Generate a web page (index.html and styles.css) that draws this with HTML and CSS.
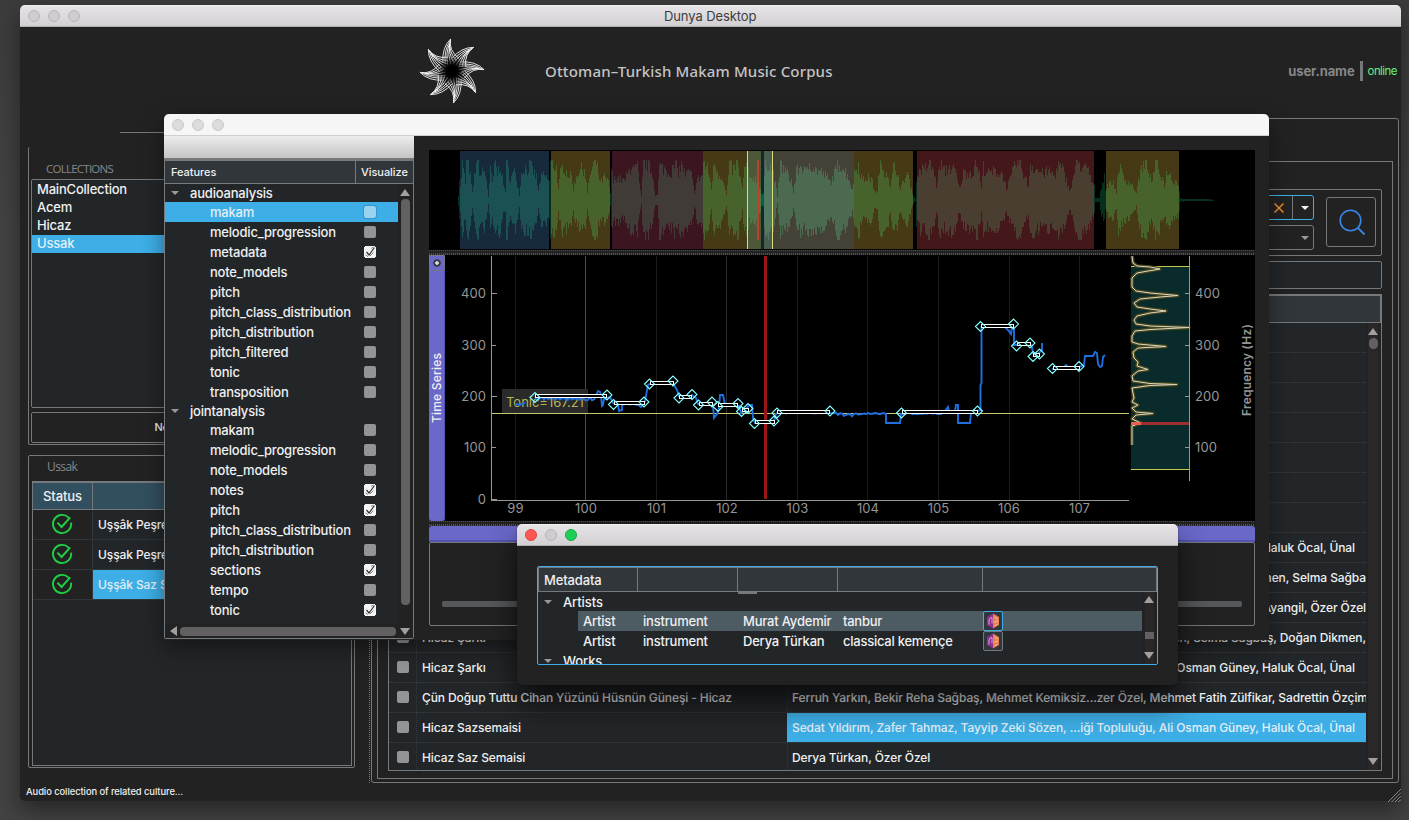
FILE: index.html
```html
<!DOCTYPE html>
<html lang="en">
<head>
<meta charset="utf-8">
<title>Dunya Desktop</title>
<link rel="stylesheet" href="styles.css">
</head>
<body>
<svg class="defs" width="0" height="0">
  <symbol id="ok" viewBox="0 0 22 22"><path d="M17.6 4.6A9.1 9.1 0 1 0 20.1 9.6M6.4 9.6l4.2 4.4 8.6-9.6" fill="none" stroke="#1fd044" stroke-width="1.9"/></symbol>
  <symbol id="cube" viewBox="0 0 14 16"><path d="M7 .5L1 4v8l6 3.5z" fill="#8a2f8c"/><path d="M7 .5L13 4v8l-6 3.5z" fill="#e8814f"/><path d="M3 11.500V7q1-3 3-2.500v6" fill="none" stroke="#d8a0dc" stroke-width="1"/><path d="M8.500 4l3 2M8.500 9l3.500-1M9 13l2-2" stroke="#f8c9a0" stroke-width=".9"/></symbol>
  <symbol id="petal" viewBox="-34 -34 68 68" overflow="visible"><path d="M-2-33Q-11-24-9.500-8M-2.500-31Q-9-21-7-7M-3-28Q-7-19-4.500-6M-3-27Q-5-17-1.500-7M-3-28Q-4-18 1.500-9M-2.500-31Q-4-20 4-11M-2-33Q-4-21 7-13" fill="none" stroke="#fff" stroke-width=".85"/></symbol>
  <symbol id="chk" viewBox="0 0 12 12"><path d="M0 0h12v12H0z" fill="#f4f4f4"/><path d="M0 1V0h1M11 0h1v1M12 11v1h-1M1 12H0v-1" fill="none" stroke="#111" stroke-width="1.400"/><path d="M2.500 6l2.500 3L10.500 1.500" fill="none" stroke="#333" stroke-width="1.200"/><path d="M1.500 9l2.500 1.500M6 10l3.500-3.500M7 2.500L9.500 1" stroke="#777" stroke-width=".9"/></symbol>
</svg>

<div class="window main">
  <div class="titlebar"><i></i><i></i><i></i><span>Dunya Desktop</span></div>
  <header class="banner">
    <svg class="logo" viewBox="-34 -34 68 68">
      <g id="petals"></g>
      <circle r="16" fill="url(#core)"/>
      <radialGradient id="core"><stop offset=".3" stop-color="#000"/><stop offset="1" stop-color="#000" stop-opacity="0"/></radialGradient>
    </svg>
    <h1>Ottoman–Turkish Makam Music Corpus</h1>
    <div class="user"><b>user.name</b><i></i><span>online</span></div>
  </header>
  <div class="body">
    <aside class="left">
      <div class="tabline"></div>
      <section class="box collections">
        <h2>COLLECTIONS</h2>
        <ul class="list"><li>MainCollection</li><li>Acem</li><li>Hicaz</li><li class="sel">Ussak</li></ul>
        <div class="newbtn">New Collection</div>
      </section>
      <section class="box ussak">
        <h2>Ussak</h2>
        <div class="status">
          <div class="sr head"><span>Status</span><span></span></div>
          <div class="sr"><span><svg><use href="#ok"/></svg></span><span>Uşşâk Peşrevi</span></div>
          <div class="sr"><span><svg><use href="#ok"/></svg></span><span>Uşşak Peşrevi</span></div>
          <div class="sr"><span><svg><use href="#ok"/></svg></span><span class="sel">Uşşâk Saz Semaisi</span></div>
        </div>
      </section>
    </aside>
    <div class="vsplit"></div>
    <main class="right">
      <div class="inner">
        <div class="filters">
          <div class="combos">
            <div class="combo on"><svg class="x" viewBox="0 0 10 10"><path d="M.5.500l9 9M9.500.500l-9 9" stroke="#f08a24" stroke-width="1.500"/></svg><span><b class="down"></b></span></div>
            <div class="combo"><span><b class="down dim"></b></span></div>
          </div>
          <div class="search"><svg viewBox="0 0 28 28"><circle cx="11.500" cy="11.500" r="10.300" fill="none" stroke="#3d84e6" stroke-width="1.600"/><path d="M18.500 18.500l7 7" stroke="#3d84e6" stroke-width="1.800"/></svg></div>
        </div>
        <div class="searchline"></div>
        <div class="table">
          <div class="thead"></div>
          <div class="tbody">
            <div class="rows">
              <div class="row"></div><div class="row"></div><div class="row"></div><div class="row"></div><div class="row"></div><div class="row"></div><div class="row"></div>
              <div class="row"><i></i><span></span><p class="end w11">Osman Güney, Haluk Öcal, Ünal</p></div>
              <div class="row"><i></i><span></span><p class="end">Doğan Dikmen, Selma Sağba</p></div>
              <div class="row"><i></i><span></span><p class="end">Ruhi Ayangil, Özer Özel</p></div>
              <div class="row"><i></i><span>Hicaz Şarkı</span><p class="end">Doğan Dikmen, Selma Sağbaş, Doğan Dikmen,</p></div>
              <div class="row"><i></i><span>Hicaz Şarkı</span><p class="end w11">Ali Osman Güney, Haluk Öcal, Ünal</p></div>
              <div class="row"><i></i><span>Çün Doğup Tuttu Cihan Yüzünü Hüsnün Güneşi - Hicaz</span><p>Ferruh Yarkın, Bekir Reha Sağbaş, Mehmet Kemiksiz...zer Özel, Mehmet Fatih Zülfikar, Sadrettin Özçim</p></div>
              <div class="row"><i></i><span>Hicaz Sazsemaisi</span><p class="sel">Sedat Yıldırım, Zafer Tahmaz, Tayyip Zeki Sözen, ...iği Topluluğu, Ali Osman Güney, Haluk Öcal, Ünal</p></div>
              <div class="row"><i></i><span>Hicaz Saz Semaisi</span><p>Derya Türkan, Özer Özel</p></div>
            </div>
            <div class="vbar"><b class="up"></b><u></u><b class="dn"></b></div>
          </div>
        </div>
      </div>
    </main>
  </div>
  <footer>Audio collection of related culture...<svg viewBox="0 0 13 13"><path d="M0 13L13 0M3.500 13L13 3.500M7 13l6-6M10.500 13l2.500-2.500" stroke="#999" stroke-width=".9"/></svg></footer>
</div>

<div class="window player">
  <div class="titlebar light"><i></i><i></i><i></i></div>
  <div class="pbody">
    <div class="dock">
      <div class="toolbar"></div>
      <div class="tree">
        <div class="trhead"><span>Features</span><span>Visualize</span></div>
        <div class="trmid">
          <div class="items">
            <div class="grp"><b class="down dim"></b>audioanalysis</div>
            <div class="it sel">makam<i class="ck"></i></div>
            <div class="it">melodic_progression<i class="ck"></i></div>
            <div class="it">metadata<svg class="chk"><use href="#chk"/></svg></div>
            <div class="it">note_models<i class="ck"></i></div>
            <div class="it">pitch<i class="ck"></i></div>
            <div class="it">pitch_class_distribution<i class="ck"></i></div>
            <div class="it">pitch_distribution<i class="ck"></i></div>
            <div class="it">pitch_filtered<i class="ck"></i></div>
            <div class="it">tonic<i class="ck"></i></div>
            <div class="it">transposition<i class="ck"></i></div>
            <div class="grp"><b class="down dim"></b>jointanalysis</div>
            <div class="it">makam<i class="ck"></i></div>
            <div class="it">melodic_progression<i class="ck"></i></div>
            <div class="it">note_models<i class="ck"></i></div>
            <div class="it">notes<svg class="chk"><use href="#chk"/></svg></div>
            <div class="it">pitch<svg class="chk"><use href="#chk"/></svg></div>
            <div class="it">pitch_class_distribution<i class="ck"></i></div>
            <div class="it">pitch_distribution<i class="ck"></i></div>
            <div class="it">sections<svg class="chk"><use href="#chk"/></svg></div>
            <div class="it">tempo<i class="ck"></i></div>
            <div class="it">tonic<svg class="chk"><use href="#chk"/></svg></div>
          </div>
          <div class="vbar"><b class="up"></b><u></u></div>
        </div>
        <div class="hbar"><b class="lt"></b><u></u><b class="dn"></b></div>
      </div>
    </div>
    <div class="plots">
      <svg class="wave" width="826" height="100" viewBox="429 150 826 100" shape-rendering="crispEdges"><g id="segs"></g><g id="waves"></g>
        <rect x="747" y="151" width="25" height="98" fill="#5fa08c" fill-opacity=".3"/>
        <rect x="761" y="151" width="3" height="98" fill="#0b2c2a"/><rect x="761" y="194" width="3" height="12" fill="#0d5c48"/>
        <path d="M747.500 151v98M772.500 151v98" stroke="#dcdc78"/><rect x="757" y="160" width="2" height="80" fill="#c0402c"/>
      </svg>
      <div class="hsplit"></div>
      <div class="series">
        <div class="vtab"><i></i><span>Time Series</span></div>
        <svg class="chart" width="810" height="266" viewBox="445 255 810 266">
          <g shape-rendering="crispEdges">
            <path d="M515.500 256v244M656.500 256v244M797.500 256v244M867.500 256v244M938.500 256v244M1009.500 256v244M1079.500 256v244" stroke="#1c1c1c"/>
            <path d="M585.500 256v244" stroke="#4b4b4b"/><path d="M726.500 256v244" stroke="#2c2c2c"/>
            <rect x="502" y="389" width="86" height="24" fill="#2a2a2a"/>
          </g>
          <text x="506" y="406.500" fill="#b4b45a" class="t" textLength="78">Tonic=167.21</text>
          <g shape-rendering="crispEdges">
            <path d="M491 413.500h638" stroke="#c8c86e"/>
            <path d="M491.500 256v244.500H1129M492 293.500h5M492 345.500h4M492 396.500h5M492 447.500h4M492 499.500h5" fill="none" stroke="#969696"/>
          </g>
          <path id="pitch" fill="none" stroke="#1e6fe0" stroke-width="1.900"/>
          <rect x="764" y="256" width="3" height="243" fill="#981616"/>
          <g id="notes"></g>
          <g class="t" text-anchor="end"><text x="486" y="298">400</text><text x="486" y="350">300</text><text x="486" y="401">200</text><text x="486" y="452">100</text><text x="486" y="504">0</text></g>
          <g class="t" text-anchor="middle" id="ticks"></g>
          <g shape-rendering="crispEdges"><rect x="1131" y="266" width="58" height="203" fill="#092b2b"/>
            <path d="M1131 266.500h58M1131 469.500h58" stroke="#c8c850"/></g>
          <g id="hist" fill="none" stroke-linejoin="round"></g>
          <g shape-rendering="crispEdges"><rect x="1131" y="422" width="58" height="3" fill="#b03030" fill-opacity=".9"/><rect x="1131" y="422" width="10" height="3" fill="#e86050"/>
            <path d="M1189.500 256v225M1185 293.500h4M1185 345.500h4M1185 396.500h4M1185 447.500h4" stroke="#969696"/></g>
          <g class="t"><text x="1195" y="298">400</text><text x="1195" y="350">300</text><text x="1195" y="401">200</text><text x="1195" y="452">100</text></g>
          <text class="t bold" transform="translate(1251 370) rotate(-90)" text-anchor="middle" textLength="92">Frequency (Hz)</text>
        </svg>
      </div>
      <div class="hsplit"></div>
      <div class="htab"></div>
      <div class="sliderbox"><div></div></div>
    </div>
  </div>
</div>

<div class="window meta">
  <div class="titlebar active"><i></i><i></i><i></i></div>
  <div class="mtable">
    <div class="mhead"><span>Metadata</span><span></span><span></span><span></span><span></span></div>
    <div class="mbody">
      <div class="mrows">
        <div class="mgrp"><b class="down dim"></b>Artists<s></s></div>
        <div class="mrow sel"><span>Artist</span><span>instrument</span><span>Murat Aydemir</span><span>tanbur</span><em class="on"><svg><use href="#cube"/></svg></em></div>
        <div class="mrow"><span>Artist</span><span>instrument</span><span>Derya Türkan</span><span>classical kemençe</span><em><svg><use href="#cube"/></svg></em></div>
        <div class="mgrp"><b class="down dim"></b>Works</div>
      </div>
      <div class="vbar"><b class="up"></b><u></u><b class="dn"></b></div>
    </div>
  </div>
</div>
<script src="plots.js"></script>
</body>
</html>
```
FILE: styles.css
```css
* { box-sizing: border-box; margin: 0; padding: 0; }
body { width: 1409px; height: 820px; overflow: hidden; position: relative; background: linear-gradient(#3c3c3c, #444 30%, #434343); font: 450 13px/18px Inter, "Liberation Sans", sans-serif; color: #eff0f1; letter-spacing: -.2px; }
i, em { font-style: normal; }
ul { list-style: none; }
.defs { position: absolute; }
.sel { background: #3daee6; color: #e2eef6; }

.window { position: absolute; display: flex; flex-direction: column; background: #222; border-radius: 5px; }
.main { left: 20px; top: 5px; width: 1381px; height: 796px; box-shadow: 0 10px 24px rgba(0,0,0,.45); }
.player { left: 164px; top: 114px; width: 1105px; height: 526px; border-radius: 5px 5px 0 0; box-shadow: 0 8px 22px rgba(0,0,0,.42); }
.meta { left: 517px; top: 524px; width: 661px; height: 161px; box-shadow: 0 18px 30px rgba(0,0,0,.65), 0 0 2px rgba(0,0,0,.4); }

.titlebar { flex: none; height: 22px; display: flex; align-items: center; gap: 8px; padding-left: 8px; border-radius: 5px 5px 0 0; background: linear-gradient(#f3f1f3 0, #e5e3e5 8%, #d2d0d2); border-bottom: 1px solid #b0aeb0; }
.titlebar i { width: 12px; height: 12px; border-radius: 50%; background: #cfcdcf; border: 1px solid #b6b4b6; }
.titlebar span { color: #3c3c3e; margin-left: 576px; letter-spacing: -.1px; font-weight: 400; }
.light { background: #f6f6f6; border-color: #cfcfcf; }
.light i { background: #dcdcdc; border-color: #c8c8c8; }
.active i:nth-child(1) { background: #fc5753; border-color: #e1443f; }
.active i:nth-child(3) { background: #1fce58; border-color: #12ac3f; }

.banner { height: 91px; flex: none; display: flex; align-items: center; padding: 0 4px 3px 399px; }
.logo { width: 66px; height: 66px; }
h1 { font: 500 15px/20px "Noto Sans", sans-serif; color: #c4c4c4; margin-left: 60px; letter-spacing: .16px; }
.user { margin-left: auto; display: flex; align-items: center; color: #85878a; }
.user b { font-weight: 700; letter-spacing: -.1px; }
.user i { width: 3px; height: 20px; background: #76797c; margin: 0 5px; }
.user span { font-size: 11.500px; font-weight: 400; color: #63f07f; letter-spacing: -.55px; }

.body { height: 665px; display: flex; padding-left: 8px; }
.left { width: 327px; padding-top: 14px; }
.tabline { height: 1px; margin-left: 92px; background: #76797c; }
.box { border: 1px solid #76797c; border-radius: 2px; padding: 0 2px; }
.box h2 { font: 12px/16px "Open Sans", sans-serif; letter-spacing: -.6px; color: #85888b; }
.collections { margin-top: 14px; height: 298px; border-top: 0; }
.collections h2 { font-size: 11.500px; padding: 14px 0 2px 15px; letter-spacing: -.75px; }
.list { height: 229px; border: 1px solid #76797c; border-radius: 2px; background: #232629; padding-top: 1px; }
.list li { height: 18px; line-height: 17px; padding-left: 5px; }
.newbtn { margin-top: 4px; height: 31px; border: 1px solid #76797c; border-radius: 2px; font: 500 11px/29px Inter, sans-serif; text-align: center; letter-spacing: -.4px; }
.ussak { margin-top: 10px; height: 313px; padding: 3px 2px 1px 3px; }
.ussak h2 { padding-left: 15px; font-size: 12px; }
.status { margin-top: 6px; height: 285px; border: 1px solid #76797c; background: #232629; }
.sr { display: flex; height: 30px; }
.sr span { border-bottom: 1px solid #31363b; line-height: 29px; flex: 1; padding-left: 5px; white-space: nowrap; overflow: hidden; font-size: 12px; letter-spacing: -.1px; }
.sr span:first-child { flex: none; width: 60px; border-right: 1px solid #31363b; background: #222; padding: 3px 0 0 18px; }
.sr svg { width: 22px; height: 22px; display: block; }
.sr.head { height: 28px; border-top: 1px solid #76797c; }
.sr.head span, .sr.head span:first-child { background: #314f5e; border-color: #76797c; font: 500 13px/26px Inter, sans-serif; padding: 0 0 0 10px; }

.vsplit { width: 1px; margin: 0 0 0 14px; background: repeating-linear-gradient(#777 0 1px, transparent 1px 2px); }
.right { margin-left: 1px; width: 1028px; height: 665px; border: 1px solid #76797c; border-radius: 3px; padding: 42px 5px 3px; }
.inner { height: 618px; border: 1px solid #76797c; padding: 27px 10px 7px 10px; }
.filters { height: 67px; border: 1px solid #76797c; border-radius: 2px; display: flex; justify-content: flex-end; align-items: flex-start; padding: 5px 5px 0 0; gap: 12px; }
.combos { display: flex; flex-direction: column; gap: 5px; }
.combo { width: 300px; height: 25px; border: 1px solid #76797c; border-radius: 3px; display: flex; justify-content: flex-end; align-items: center; }
.combo.on { border-color: #3daee9; }
.combo .x { width: 10px; height: 10px; }
.combo span { width: 21px; height: 23px; display: flex; align-items: center; justify-content: center; margin-left: 8px; padding-left: 4px; }
.combo.on span { border-left: 1px solid #76797c; }
.down { border: 4px solid transparent; border-top: 4px solid #eff0f1; border-bottom: 0; width: 0; height: 0; }
.down.dim { border-top-color: #999; }
.search { width: 50px; height: 50px; margin-top: 2px; border: 1px solid #76797c; border-radius: 3px; padding: 11px 0 0 12px; }
.search svg { width: 28px; height: 28px; display: block; }
.searchline { height: 28px; margin-top: 5px; border: 1px solid #76797c; border-radius: 2px; background: #232629; }
.table { margin-top: 5px; height: 477px; border: 1px solid #76797c; background: #232629; }
.thead { height: 28px; background: #31363b; border: 1px solid #76797c; border-left: 0; }
.tbody { height: 447px; display: flex; overflow: hidden; }
.rows { flex: 1; min-width: 0; }
.row { height: 30px; display: flex; align-items: center; border-bottom: 1px dotted #3b4045; font-size: 12px; letter-spacing: -.1px; }
.row i { width: 12px; height: 12px; margin: 0 7px 1px 8px; border-radius: 2px; background: #939496; flex: none; }
.row span { width: 371px; border-left: 1px dotted #33383d; height: 30px; line-height: 29px; padding-left: 5px; flex: none; white-space: nowrap; }
.row p { flex: 1; min-width: 0; height: 29px; line-height: 29px; padding-left: 4px; border-left: 1px dotted #33383d; white-space: nowrap; overflow: hidden; }
.row p.sel { border-left-color: #3daee6; }
.row p.end { display: flex; justify-content: flex-end; }
.row p.w11 { padding-right: 11px; }
.vbar { display: flex; flex-direction: column; align-items: center; flex: none; background: #222; }
.vbar u { background: #626062; border-radius: 4px; display: block; }
.up, .dn { width: 0; height: 0; border: 5px solid transparent; }
.up { border-bottom: 7px solid #a0a0a0; border-top: 0; }
.dn { border-top: 7px solid #a0a0a0; border-bottom: 0; }
.table .vbar { width: 15px; padding: 5px 1px 5px 0; background: linear-gradient(90deg, #222 2px, #2a2728 2px 12px, #222 12px); }
.table .vbar u { width: 9px; height: 11px; margin-top: 3px; border-radius: 5px; }
.table .vbar .dn { margin-top: auto; }
footer { font: 500 9.400px/14px Inter, sans-serif; padding: 2px 0 0 6px; display: flex; justify-content: space-between; letter-spacing: -.07px; }
footer svg { width: 13px; height: 13px; margin-top: 4px; }

.pbody { display: flex; height: 504px; }
.dock { width: 250px; }
.toolbar { height: 22px; background: linear-gradient(#ededed, #c4c4c4); }
.tree { height: 481px; border: 1px solid #76797c; border-top-width: 2px; background: #232629; border-radius: 0 0 2px 2px; }
.trhead { height: 24px; display: flex; background: #31363b; border: solid #76797c; border-width: 1px 0; font: 500 11px/23px Inter, sans-serif; letter-spacing: -.05px; }
.trhead span:first-child { width: 191px; padding-left: 6px; border-right: 1px solid #76797c; }
.trhead span + span { padding-left: 5px; }
.trmid { display: flex; height: 440px; }
.items { flex: 1; }
.grp { height: 18px; padding-left: 6px; display: flex; align-items: center; gap: 11px; }
.it { height: 20px; padding: 0 22px 0 45px; display: flex; justify-content: space-between; align-items: center; }
.ck { width: 12px; height: 12px; border-radius: 2px; background: #939496; }
.it.sel .ck { background: #9ad3f2; outline: 1px solid #3596cb; }
.chk { width: 12px; height: 12px; }
.tree .vbar { width: 15px; padding: 5px 1px 5px 0; }
.tree .vbar u { width: 9px; height: 406px; margin-top: 3px; }
.hbar { display: flex; align-items: center; height: 14px; background: #222; padding: 0 3px 0 5px; }
.hbar .lt { width: 0; height: 0; border: 5px solid transparent; border-right: 7px solid #a0a0a0; border-left: 0; }
.hbar u { width: 216px; height: 9px; background: #626062; border-radius: 4px; margin: 0 4px 0 3px; }
.plots { padding: 14px 0 0 15px; width: 841px; }
.plots svg { display: block; background: #000; }
.hsplit { height: 5px; background: repeating-linear-gradient(90deg, #505050 0 1px, transparent 1px 2px) 0 0 / 100% 1px no-repeat, repeating-linear-gradient(90deg, #505050 0 1px, transparent 1px 2px) 0 3px / 100% 2px no-repeat; }
.series { display: flex; height: 266px; }
.vtab { width: 16px; background: #6a68c8; border-right: 1px solid #5553b4; border-radius: 0 0 3px 3px; }
.vtab i { display: block; width: 16px; height: 16px; border: 1px solid #77778a; border-radius: 2px; background: radial-gradient(circle, #ddd 0 1.500px, #3c3c44 2px 3.500px, transparent 4px); }
.vtab span { display: block; writing-mode: vertical-rl; transform: rotate(180deg); height: 152px; line-height: 16px; font-size: 12px; letter-spacing: .2px; width: 16px; }
.htab { height: 16px; background: #6a68c8; border-bottom: 2px solid #5553b4; border-radius: 3px 3px 0 0; }
.sliderbox { height: 84px; border: 1px solid #76797c; border-radius: 2px; padding: 58px 12px 0; }
.sliderbox div { height: 6px; border-radius: 2px; background: #55595c; }
.t { font: 13px Inter, sans-serif; fill: #969696; letter-spacing: .1px; }
text.t[fill] { fill: #b4b45a; }
text.bold { font-weight: 600; font-size: 12px; }

.mtable { margin: 20px 20px 0; height: 99px; border: 1px solid #3daee9; border-radius: 2px; background: #232629; overflow: hidden; }
.mhead { height: 25px; display: flex; background: #31363b; border: 1px solid #76797c; line-height: 24px; letter-spacing: -.15px; }
.mhead span { width: 100px; padding-left: 5px; border-right: 1px solid #76797c; }
.mhead span:first-child { width: 99px; }
.mhead span:nth-child(4) { width: 145px; }
.mhead span:last-child { flex: 1; border: 0; }
.mbody { display: flex; height: 72px; }
.mrows { flex: 1; height: 72px; overflow: hidden; }
.mgrp { height: 19px; padding: 1px 0 0 6px; display: flex; align-items: center; gap: 11px; letter-spacing: -.1px; }
.mgrp s { width: 19px; height: 2px; margin: -18px 0 0 124px; background: #76797c; }
.mrow { height: 20px; margin-left: 40px; display: flex; line-height: 20px; letter-spacing: -.2px; white-space: nowrap; }
.mrow.sel { background: #4d5b63; color: #eff0f1; }
.mrow span { width: 100px; padding-left: 5px; }
.mrow span:first-child { width: 60px; }
.mrow span:nth-child(4) { width: 145px; letter-spacing: -.25px; }
.mrow em { width: 20px; height: 20px; border: 1px solid #76797c; border-radius: 2px; background: #31363b; display: flex; align-items: center; justify-content: center; }
.mrow em.on { border-color: #3daee9; }
.mrow svg { width: 14px; height: 16px; }
.mtable .vbar { width: 15px; padding: 4px 1px 4px 0; background: linear-gradient(90deg, #222 3px, #2a2728 3px 12px, #222 12px); }
.mtable .vbar u { width: 9px; height: 7px; margin-top: 29px; border-radius: 0; }
.mtable .vbar .dn { margin-top: 13px; }
```
FILE: plots.js
```js
const byId = id => document.getElementById(id);

byId('petals').innerHTML = Array.from({ length: 8 }, (_, k) =>
  `<use href="#petal" x="-34" y="-34" width="68" height="68" transform="rotate(${k * 45 + 1})"/>`).join('');

// section: start, end, background, waveform colour
const sections = [
  [429, 460, '#000', '#05301f'], [460, 549, '#16293d', '#1b5152'], [549, 551, '#000', '#05301f'],
  [551, 610, '#463a16', '#48622c'], [610, 612, '#000', '#05301f'], [612, 703, '#3b151f', '#403b36'],
  [703, 761, '#463a16', '#48622c'], [761, 764, '#000', '#05301f'], [764, 854, '#444136', '#4b6a50'],
  [854, 913, '#463a16', '#48622c'], [913, 917, '#000', '#05301f'], [917, 1094, '#44181b', '#4a3e31'],
  [1094, 1106, '#000', '#05301f'], [1106, 1179, '#463a16', '#48622c'], [1179, 1255, '#000', '#05301f']
];
// envelope: x, half height
const env = [457,0,458,5,459,23,460,12,462,38,465,18,466,40,468,40,470,25,472,7,474,25,476,40,478,40,480,25,483,32,486,22,488,4,490,30,492,18,495,40,497,28,500,38,503,15,505,10,506,40,510,22,513,28,515,30,519,6,521,28,524,35,527,32,529,37,532,32,536,24,538,9,540,22,543,26,547,22,549,20,550,40,552,38,556,34,558,10,560,28,563,36,567,28,571,24,573,12,576,25,579,32,584,34,587,8,590,28,594,40,596,38,600,18,604,24,608,18,610,8,611,31,613,20,616,25,620,22,624,20,628,28,632,40,634,30,637,36,639,15,641,4,643,40,646,40,650,32,652,28,655,5,657,5,659,35,663,33,668,30,671,30,675,36,678,30,682,38,685,24,688,30,691,25,694,8,697,22,702,26,703,40,708,30,711,12,714,40,718,28,722,24,724,14,726,5,729,35,733,32,737,40,740,22,742,12,744,30,747,40,749,20,753,25,757,22,760,12,762,6,765,35,768,40,771,35,773,30,777,4,780,38,784,32,788,26,791,20,793,8,796,30,801,36,806,28,809,40,815,32,820,30,826,25,830,18,835,30,839,40,845,30,848,25,852,10,854,30,858,38,862,20,867,24,871,22,874,10,877,8,879,36,884,32,888,28,890,12,893,34,897,32,900,10,903,20,907,28,910,15,913,4,915,1,916,25,917,22,920,35,923,30,929,40,933,32,936,15,940,38,944,30,949,35,955,30,959,12,963,28,968,30,972,28,976,40,979,28,981,12,983,35,988,28,994,30,1002,28,1006,12,1010,22,1016,40,1020,38,1024,25,1028,15,1030,38,1036,32,1042,28,1049,30,1054,26,1058,36,1062,32,1070,10,1076,40,1082,36,1088,30,1092,18,1094,15,1095,2,1099,2,1101,15,1104,27,1105,10,1107,15,1112,20,1116,8,1118,36,1124,22,1130,18,1134,12,1136,6,1138,22,1142,36,1148,35,1151,16,1155,40,1160,28,1164,16,1167,32,1172,22,1178,18,1180,1.5,1200,1,1213,.5,1214,0];
let seed = 7;
const rnd = () => (seed = (seed * 16807) % 2147483647) / 2147483647;
function height(x) {
  for (let i = 0; i < env.length - 2; i += 2)
    if (x >= env[i] && x <= env[i + 2])
      return env[i + 1] + (env[i + 3] - env[i + 1]) * (x - env[i]) / (env[i + 2] - env[i]);
  return 0;
}
let backs = '', waves = '';
for (const [a, b, bg, fg] of sections) {
  backs += `<rect x="${a}" y="151" width="${b - a}" height="98" fill="${bg}"/>`;
  let d = '';
  for (let x = a; x < b; x++) {
    const h = height(x);
    if (h <= 0) continue;
    const up = Math.max(.5, Math.min(40, Math.round(h * (.72 + .45 * rnd()))));
    const down = Math.max(.5, Math.min(40, Math.round(h * (.72 + .45 * rnd()))));
    d += `M${x} ${200 - up}h1v${up + down}h-1z`;
  }
  waves += `<path d="${d}" fill="${fg}"/>`;
}
byId('segs').innerHTML = backs;
byId('waves').innerHTML = waves;

byId('ticks').innerHTML = [99,100,101,102,103,104,105,106,107]
  .map((n, i) => `<text x="${515.5 + i * 70.5}" y="513">${n}</text>`).join('');

// jittered stretches stand for the small wobble of a held pitch
function wobble(x0, x1, y, amp) {
  let d = '';
  for (let x = x0; x <= x1; x += 2) d += ` ${x},${(y + (rnd() - .5) * amp).toFixed(1)}`;
  return d;
}
byId('pitch').setAttribute('d',
  'M515,405 517,404 519,405 525,403M535,398' + wobble(538, 594, 398.5, 4) +
  ' 596,396 598,391 600,392 601,396 602,406 603,405 604,399 607,398 610,397 613,403 618,405 619,411 622,410 622,404' + wobble(624, 638, 404, 1.5) +
  ' 641,407 645,401 648,385 650,384 672,384 674,385 677,390 679,396 690,397 692,395 696,398 698,404 711,404 713,406 714,418 717,414 719,408 720,395 723,395 725,405 739,406 741,413 744,411 747,408 749,405 752,405 753,418 755,423 772,422 774,421 776,414 778,413' +
  wobble(780, 836, 413, 1) + wobble(838, 858, 414.5, 4) + wobble(860, 884, 413.5, 1.5) +
  ' 886,414 886,423 900,423 901,414' + wobble(903, 942, 413.5, 2) +
  ' 945,411 948,407 949,412 955,411 956,405 958,405 958,423 970,423 971,413 977,411 980.5,410 980.5,385 981.5,383 981.5,327 1005,327 1008,330 1011,334 1012,327 1014,329 1014,345 1030,344 1032,347 1033,353 1035,355 1038,354 1042,350 1042,343' +
  'M1052,369 1063,368 1066,365 1070,369 1078,368 1081,366 1084,365 1085,356 1093,356 1095,352 1097,353 1098,364 1100,367 1102,366 1103,357 1105,355');

// x start, x end, y, start marker y, end marker y
const notes = [[535,607,396,397.5,395],[613.5,644,403,404.5,402],[649.5,673,383,384,381],[679,692,396.5,398,394.5],[698.5,712,403.5,405,402],[718,738,405,406.5,403.5],[741.5,748,410,411.5,408.5],[754.5,774,422,423.5,421],[777,830,412,413,411],[901.5,977.5,412,413,411],[980.5,1013.5,325.5,326.5,324],[1016.5,1030,344,346,343],[1033,1039.5,355,356.5,354],[1052.5,1079,367.5,368.5,366.5]];
const diamond = (x, y) => `M${x - 5} ${y}l5-5 5 5-5 5z`;
byId('notes').innerHTML = notes.map(([a, b, y, y0, y1]) =>
  `<rect x="${Math.round(a) + .5}" y="${Math.round(y) - 1.5}" width="${Math.round(b - a) - 1}" height="3" fill="#000" stroke="#fff"/>` +
  `<path d="${diamond(a, y0)}${diamond(b, y1)}" fill="none" stroke="#8ff" stroke-width="1.1"/>`).join('');

const hist = 'M1132,256 1133,263 1137,266 1150,267 1160,269 1148,271 1137,273 1132,278 1132,287 1136,291 1150,293 1178,295.5 1160,297 1140,299 1134,303 1137,307 1150,309 1166,311 1150,313 1137,316 1134,320 1136,324 1150,326 1189,327.5 1150,329.5 1135,331 1132,336 1132,342 1138,344 1166,346.5 1138,348 1133,352 1134,358 1138,362 1137,366 1148,369.5 1138,371 1132,376 1133,381 1150,383.5 1177,384.5 1150,385.5 1132,388 1133,393 1134,398 1132,402 1138,405 1132,408 1136,412 1153,413.5 1136,415 1132,419 1141,423 1132,426 1132,445';
byId('hist').innerHTML = `<path d="${hist}" stroke="#4a461c" stroke-width="3.500"/><path d="${hist}" stroke="#d8d8c8" stroke-width="1"/>`;
```
